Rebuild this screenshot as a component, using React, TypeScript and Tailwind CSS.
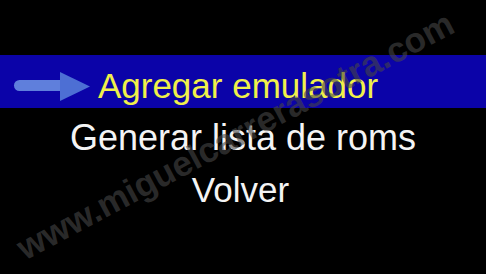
import React from 'react';

const items = [
  { label: 'Generar lista de roms', size: 'text-[36px]' },
  { label: 'Volver', size: 'text-[35px] pr-[5px]' },
];

const Arrow: React.FC = () => (
  <svg width="80" height="32" viewBox="0 0 80 32" className="absolute left-[12px] top-[16px]">
    <rect x="2" y="9" width="52" height="11" rx="5.5" fill="#5f7fdc" />
    <polygon points="48,1 78,15.5 48,30" fill="#4d6fd4" />
  </svg>
);

const App: React.FC = () => {
  return (
    <div
      className="relative w-[486px] h-[274px] bg-black overflow-hidden"
      style={{ fontFamily: '"Liberation Sans", Arial, sans-serif' }}
    >
      <div className="flex flex-col pt-[55px]">
        {/* selected option */}
        <div className="relative h-[53px] bg-[#0b03a8]">
          <Arrow />
          <div className="pt-[8px] pr-[10px] text-center text-[35px] leading-[45px] text-[#f0f04a]">
            Agregar emulador
          </div>
        </div>

        {items.map((it) => (
          <div key={it.label} className={`h-[52px] pt-[8px] text-center leading-[44px] text-[#f4f4f4] ${it.size}`}>
            {it.label}
          </div>
        ))}
      </div>

      {/* watermark */}
      <div
        className="absolute left-[235px] top-[135px] whitespace-nowrap text-[35px] leading-none font-bold text-[rgba(70,70,70,0.6)] pointer-events-none"
        style={{ transform: 'translate(-50%, -50%) rotate(-28deg)', fontFamily: '"Liberation Sans", Arial, sans-serif' }}
      >
        www.miguelcarrerasotra.com
      </div>
    </div>
  );
};

export default App;
